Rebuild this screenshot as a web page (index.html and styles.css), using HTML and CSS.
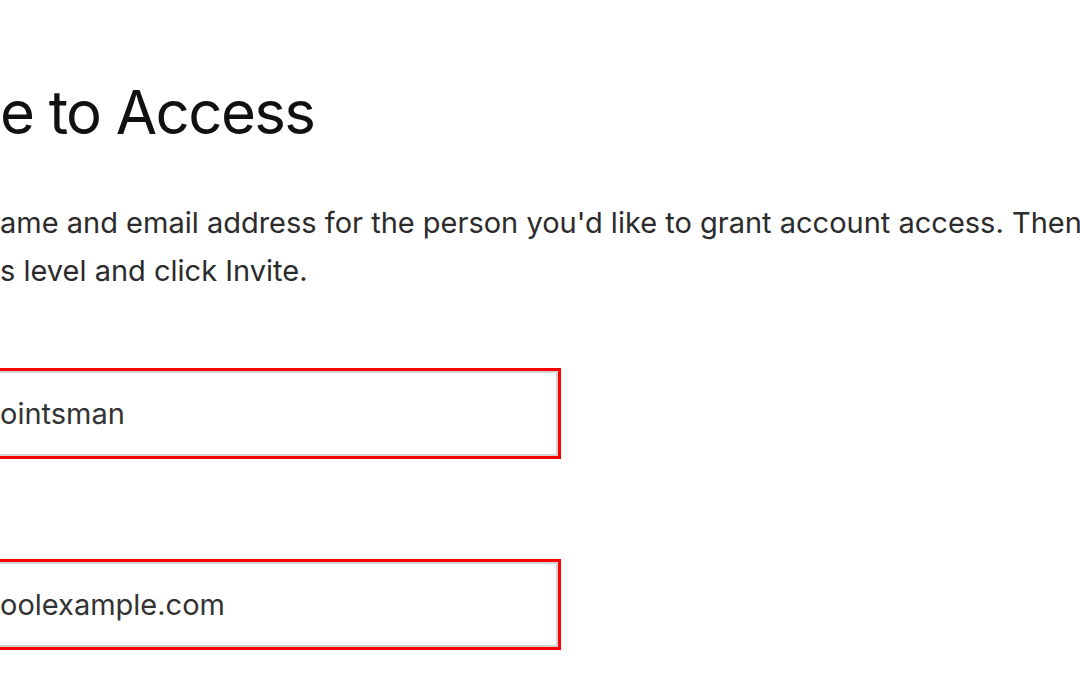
FILE: index.html
```html
<!DOCTYPE html>
<html lang="en">
<head>
  <meta charset="UTF-8" />
  <meta name="viewport" content="width=device-width, initial-scale=1.0"/>
  <title>Invite to Access</title>
  <link rel="stylesheet" href="styles.css">
</head>
<body>
  <main class="page">
    <h1>e to Access</h1>
    <p class="intro">ame and email address for the person you'd like to grant account access. Then<br />s level and click Invite.</p>

    <!-- Invite form -->
    <form class="invite-form">
      <input type="text" class="field" aria-label="Name" value="ointsman" />
      <input type="text" class="field" aria-label="Email" value="oolexample.com" />
    </form>
  </main>
</body>
</html>
```

FILE: styles.css
```css
body {
  margin: 0;
  font-family: 'Inter', 'Liberation Sans', sans-serif;
  background-color: #fff;
  color: #2b2b2b;
  overflow: hidden;
}

.page {
  padding-top: 72px;
}

h1 {
  margin: 0;
  font-size: 60px;
  font-weight: 400;
  line-height: 80px;
  letter-spacing: -1.6px;
  color: #111;
}

.intro {
  margin: 47px 0 0;
  font-size: 29px;
  line-height: 48px;
  white-space: nowrap;
}

.invite-form {
  display: flex;
  flex-direction: column;
  gap: 100px;
  margin-top: 73px;
}

.field {
  box-sizing: border-box;
  width: 601px;
  height: 91px;
  margin-left: -40px;
  padding: 0 20px 0 37px;
  border: 3px solid #f00;
  box-shadow: inset 0 0 0 2px #d4d4d4;
  font-family: inherit;
  font-size: 29px;
  color: #333;
  background: #fff;
  outline: none;
}
```
